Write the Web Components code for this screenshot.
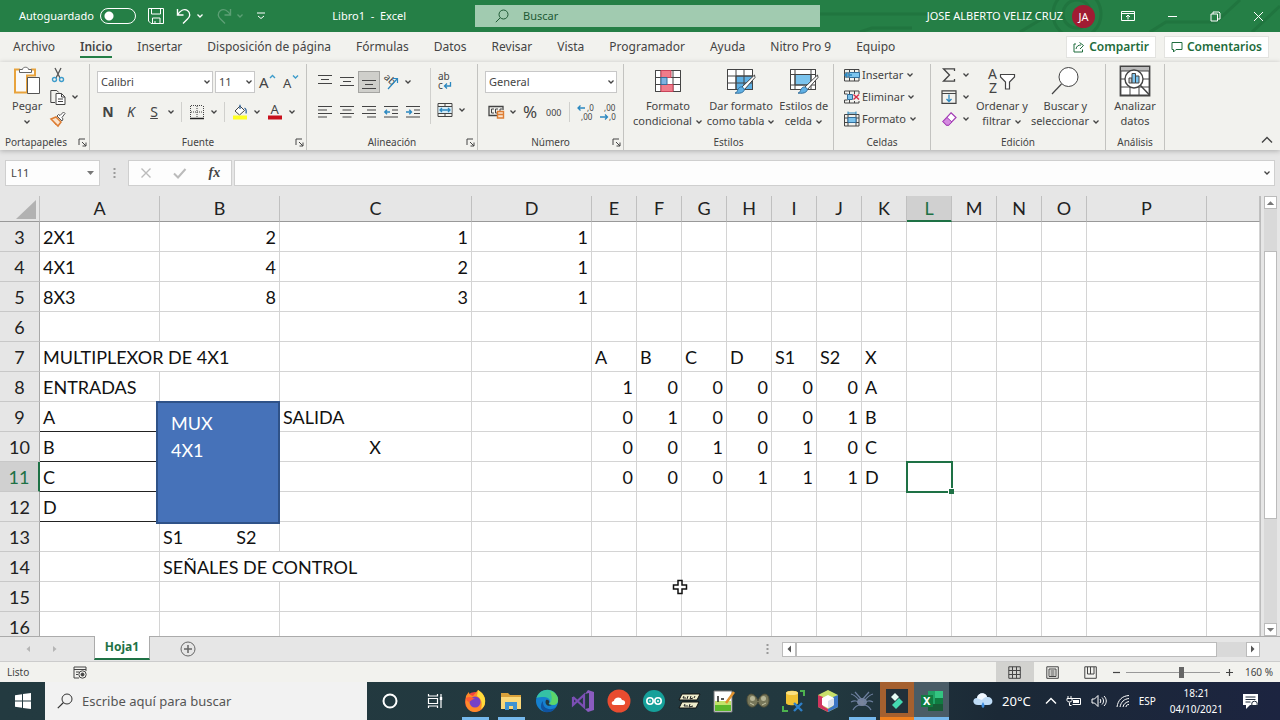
<!DOCTYPE html>
<html lang="es">
<head>
    <meta charset="UTF-8">
    <meta name="viewport" content="width=device-width, initial-scale=1.0">
    <title>Libro1 - Excel</title>
    <style>
        html, body {
            margin: 0;
            height: 100%;
        }
        body {
            --green: #257f46;
            --ink: #444;
            --ribbon: #f2f2ee;
            --grey: #e6e6e6;
            --line: #d4d4d4;
            display: flex;
            flex-direction: column;
            overflow: hidden;
            background: var(--grey);
            color: var(--ink);
            font: 11px/16px "Noto Sans", "Open Sans", sans-serif;
        }
        spread-sheet {
            flex: 1;
        }
    </style>
</head>
<body>
    <title-bar></title-bar>
    <ribbon-tabs></ribbon-tabs>
    <ribbon-panel></ribbon-panel>
    <formula-bar></formula-bar>
    <spread-sheet></spread-sheet>
    <sheet-tabs></sheet-tabs>
    <status-bar></status-bar>
    <task-bar></task-bar>

    <script>
        "use strict";

        // every icon: [width, height, markup]
        const ICONS = {
            chevron: [8, 6, '<path d="M1.5 1.5 4 4l2.500-2.500" stroke-width="1.300"/>'],
            chevronUp: [12, 8, '<path d="M1 6.500l5-5 5 5" stroke-width="1.400"/>'],
            caretDown: [9, 6, '<path d="M1 1h7L4.500 5z" fill="#777" stroke="none"/>'],
            launcher: [9, 9, '<path d="M1 7V1h6M4 4l4 4M8 4.500V8H4.500"/>'],
            save: [16, 16, '<path d="M.5.5h15v15H3l-2.500-2.500zM3.500.5v5.500h9V.5M4.500 15.500v-5.500h7.500v5.500M7 13v2.500"/>'],
            undo: [16, 16, '<path d="M1.500 1v6h6M1.500 7C4 3 8 .5 11.500 2.500c3.500 2.500 2.500 6.500 0 8.500L7 15.500" stroke-width="1.400"/>'],
            redo: [16, 16, '<path d="M14.500 1v6h-6M14.500 7C12 3 8 .5 4.500 2.500 1 5 2 9 4.500 11L9 15.500" stroke-width="1.400"/>'],
            customize: [10, 8, '<path d="M1 1h8M2 4l3 2.500L8 4"/>'],
            search: [14, 14, '<circle cx="8.500" cy="5.500" r="4.500"/><path d="M5.300 8.700.8 13.200"/>'],
            searchTask: [16, 16, '<circle cx="10" cy="6" r="5"/><path d="M6.500 9.500.8 15.200" stroke-width="1.200"/>'],
            ribbonMode: [14, 12, '<path d="M.5 1.500h13v9H.5zM.5 3.500h13M7 9.500V5.500M5 7l2-2 2 2"/>'],
            minimize: [11, 11, '<path d="M1 5.500h9"/>'],
            restore: [11, 11, '<path d="M1 3h6.500v7H1zM3 3V1h6l1 1v6H7.500"/>'],
            close: [11, 11, '<path d="M1 1l9 9M10 1l-9 9"/>'],
            share: [12, 12, '<path d="M3 3H1v8h8.500V8.500M3 8c.5-3 2.500-4 5-4M6.500 1.500 10.500 4.500l-3.500 3.500"/>'],
            comment: [12, 12, '<path d="M1 1.500h10v7H5L2.500 11V8.500H1z"/>'],

            paste: [28, 30, '<path d="M7 3.500H2v23h12V9.500h8v-6h-4" stroke="#e8a33d" stroke-width="2" fill="#fafafa"/><path d="M6.500 6.500h12v-3h-3c0-3-6-3-6 0h-3z" fill="#fff" stroke="#666"/><path d="M14.500 11.500h12v16h-12z" fill="#fff" stroke="#555"/>'],
            cut: [14, 16, '<path d="M4 1l5 10M10 1 5 11" stroke="#555" stroke-width="1.300"/><circle cx="3.500" cy="12.500" r="2" stroke="#3d9ccb" stroke-width="1.400"/><circle cx="10.500" cy="12.500" r="2" stroke="#3d9ccb" stroke-width="1.400"/>'],
            copy: [16, 16, '<path d="M5 13.500H.8V1.500h6l2 2"/><path d="M6 4.500h5.500l3.500 3.500v7.500H6z" fill="#fff"/><path d="M11.500 4.500V8H15M8 10h5M8 12.500h5"/>'],
            painter: [16, 16, '<path d="M1 8l5-2 5 5-3 4z" fill="#fbe3cc" stroke="#dd7d33" stroke-width="1.500"/><path d="M4 11l2 3" stroke="#dd7d33"/><path d="M7 5l5 5 1-2-1-1.500 3-4L13.500 1 10 4.500 8.500 3.500z" fill="#fff" stroke="#555"/>'],
            fontUp: [18, 16, '<text x="0" y="14" font-size="15">A</text><path d="M11 4l2.500-2.500L16 4" stroke="#3d9ccb" stroke-width="1.400"/>'],
            fontDown: [18, 16, '<text x="1" y="14" font-size="13">A</text><path d="M11 1.500 13.500 4 16 1.500" stroke="#3d9ccb" stroke-width="1.400"/>'],
            border: [16, 16, '<path d="M1.500 2v11M14.500 2v11M8 2v11M2 1.500h12M2 8h12" stroke-dasharray="1 1"/><path d="M1 14.500h14" stroke="#222" stroke-width="1.500"/>'],
            fill: [16, 16, '<path d="M3 7l5-5 4.500 4.500-5 4.500z" fill="#fff"/><path d="M8 5V.8M12.500 4c2 1 2 3 1.500 5.500" stroke="#36679b" stroke-width="1.300"/><path d="M1 11.500h14V15.500H1z" fill="#ffff20" stroke="none"/>'],
            fontColor: [16, 16, '<text x="3.500" y="10" font-size="13">A</text><path d="M1 11.500h14V15.500H1z" fill="#c8101c" stroke="none"/>'],
            top: [14, 14, '<path d="M0 .5h14M3 4.500h8M0 8.500h14" />'],
            middle: [14, 14, '<path d="M0 2.500h14M3 6.500h8M0 10.500h14"/>'],
            bottom: [14, 14, '<path d="M0 5.500h14M3 9.500h8M0 13.500h14"/>'],
            left: [14, 14, '<path d="M0 1.500h14M0 5h9M0 8.500h14M0 12h9"/>'],
            center: [14, 14, '<path d="M0 1.500h14M2.500 5h9M0 8.500h14M2.500 12h9"/>'],
            right: [14, 14, '<path d="M0 1.500h14M5 5h9M0 8.500h14M5 12h9"/>'],
            outdent: [14, 14, '<path d="M0 1.500h14M8 5h6M8 8.500h6M0 12h14"/><path d="M6 7H.8M3 4.800.8 7 3 9.200" stroke="#2b88c0" stroke-width="1.400"/>'],
            indent: [14, 14, '<path d="M0 1.500h14M8 5h6M8 8.500h6M0 12h14"/><path d="M0 7h5.500M3.300 4.800 5.500 7 3.300 9.200" stroke="#2b88c0" stroke-width="1.400"/>'],
            orient: [16, 16, '<text x="0" y="7" font-size="10" transform="rotate(42 4 6)">ab</text><path d="M5 15 14 5M10 4.500h4.500V9" stroke="#2b88c0" stroke-width="1.200"/>'],
            wrap: [16, 18, '<text x="1" y="7" font-size="10">ab</text><text x="1" y="16" font-size="10">c</text><path d="M13.500 9v4H7.500M10 10.500 7.500 13l2.500 2.500" stroke="#2b88c0" stroke-width="1.300"/>'],
            merge: [16, 16, '<path d="M1 1.500h14v13H1zM1 4.500h14M1 11.500h14M8 1.500v3M8 11.500v3"/><path d="M1.500 5h13v6h-13z" fill="#d5ecf8" stroke="none"/><path d="M3 8h10M5 6 3 8l2 2M11 6l2 2-2 2" stroke="#2b88c0" stroke-width="1.300"/>'],
            money: [17, 16, '<path d="M9 11.500H1v-9h14V6" stroke-width="1.300"/><path d="M6 5H3.500v4H6M10 5H7.500v4H9M12 8V5h2" /><path d="M9.500 7.500h6v6.500h-6zM9.500 10.500h6" fill="#fbe3cc" stroke="#dd7d33" stroke-width="1.400"/>'],
            percent: [16, 16, '<text x="0" y="14" font-size="17">%</text>'],
            thousands: [16, 12, '<text x="0" y="10" font-size="9" fill="#777">000</text>'],
            moreDec: [16, 18, '<text x="10" y="8" font-size="8">,0</text><text x="4" y="17" font-size="8">,00</text><path d="M8 5H1M3.500 2.500 1 5l2.500 2.500" stroke="#2b88c0" stroke-width="1.300"/>'],
            lessDec: [16, 18, '<text x="4" y="8" font-size="8">,00</text><text x="9" y="17" font-size="8">,0</text><path d="M0 14h7.500M5 11.500 7.500 14 5 16.500" stroke="#2b88c0" stroke-width="1.300"/>'],

            conditional: [28, 24, '<path d="M1.500 1.500h25v21h-25z" fill="#fff"/><path d="M1.500 8.500h25M1.500 15.500h25M7 1.500v21M19 1.500v21M1.500 1.500h25v21h-25z"/><path d="M7 1.500h10v7H7zM7 15.500h12v7H7z" fill="#f07c8a" stroke="#c8445a"/><path d="M7 8.500h6v7H7z" fill="#7fb2e0" stroke="#336f9c"/>'],
            formatTable: [28, 26, '<path d="M.5 1.500h25v20H.5z" fill="#fff"/><path d="M9 8h16.500v13.500H9z" fill="#5fb0e4"/><path d="M.5 1.500h25v20H.5zM.5 8h25M.5 15h25M9 1.500v20M17 1.500v20"/><path d="M27.500 7 15 19l2.500 2.500L28 9.500z" fill="#fff"/><path d="M8 25c3 0 2-5 5.500-6 3-.5 5 2.500 3 4.500-2 2-5.500 2-8.500 1.500z" fill="#5fb0e4" stroke="#336f9c"/>'],
            cellStyles: [28, 26, '<path d="M.5 1.500h25v20H.5z" fill="#fff"/><path d="M5 6.500h16V17H5z" fill="#7cc4ee"/><path d="M.5 1.500h25v20H.5zM.5 6.500h25M.5 17h25M5 1.500v20M21 1.500v20"/><path d="M27.500 7 15 19l2.500 2.500L28 9.500z" fill="#fff"/><path d="M8 25c3 0 2-5 5.500-6 3-.5 5 2.500 3 4.500-2 2-5.500 2-8.500 1.500z" fill="#5fb0e4" stroke="#336f9c"/>'],
            insertCells: [16, 14, '<path d="M.5 1.500h14.500v11.500H.5zM.5 5h14.500M.5 9h14.500M5.500 1.500v11.500M10.500 1.500v11.500"/><path d="M5 4.500h10.500v5H5z" fill="#7cc4ee" stroke="#336f9c"/><path d="M8 7H1M3.500 4.500 1 7l2.500 2.500" stroke="#2b88c0" stroke-width="1.400"/>'],
            deleteCells: [16, 14, '<path d="M.5 4V1h14.500v3M.5 10v3h14.500v-2M5.500 1v3M10.500 1v3M5.500 10v3M10.500 11v2M.5 4h3M.5 10h3"/><path d="M3.500 4.500h5v5h-5z" fill="#7cc4ee" stroke="#336f9c"/><path d="M9.500 4.500l5.500 5M15 4.500l-5.500 5" stroke="#d6304c" stroke-width="1.500"/>'],
            formatCells: [16, 16, '<path d="M.5 3.500h14.500v11.500H.5zM.5 7h14.500M.5 11.500h14.500M4 3.500v11.500M12 3.500v11.500"/><path d="M4 6.500h8v5H4z" fill="#7cc4ee" stroke="#336f9c"/><path d="M4 .5v3M12 .5v3M4 2h8" stroke="#2b88c0"/>'],
            sum: [14, 14, '<path d="M12.500 3V.8H1.500L7.500 7l-6 6.200h11V11" stroke-width="1.300"/>'],
            fillDown: [16, 14, '<path d="M1 .8h14v12.500H1zM1 3.500h14" stroke-width="1.200"/><path d="M8 4.500v7M5.500 9 8 11.500 10.500 9" stroke="#2b88c0" stroke-width="1.300"/>'],
            eraser: [15, 14, '<path d="M9 .8l5 4.700-7.500 7.700H4.500L1 9.500z" fill="#fff" stroke="#a33db5" stroke-width="1.200"/><path d="M5 5.500 10 10l-3.500 3.200H4.500L1 9.500z" fill="#d58be0" stroke="#a33db5"/>'],
            sort: [28, 30, '<text x="0" y="13" font-size="14" fill="#2b88c0">A</text><text x="1" y="27" font-size="14">Z</text><path d="M12.500 8.500h14v2.500l-5 5v7h-4v-7l-5-5z" fill="#fff" stroke-width="1.200"/>'],
            find: [28, 28, '<circle cx="17.500" cy="10" r="9.500" fill="#fff"/><path d="M10.500 17 1 27" stroke-width="1.200"/>'],
            analyze: [32, 32, '<path d="M1.500 1.500h29v29h-29z" fill="#fff" stroke-width="1.800"/><path d="M2 2h28v4H2z" fill="#bbb" stroke="none"/><path d="M1.500 6h29M1.500 14h29M1.500 22h29M11 22v8M20 22v8"/><circle cx="15" cy="14" r="9" fill="#fff" stroke-width="1.400"/><path d="M10 13h3v5h-3z" fill="#ccc"/><path d="M13 8.500h3.500V18H13zM16.500 11H20v7h-3.500z" fill="#7cc4ee"/><path d="M21.500 20.500l9 9.500" stroke-width="1.500"/>'],

            cancel: [12, 12, '<path d="M1.500 1.500l9 9M10.500 1.500l-9 9" stroke="#bbb" stroke-width="1.400"/>'],
            accept: [14, 12, '<path d="M1 6.500 5 10.500 12.500 2" stroke="#bbb" stroke-width="2"/>'],
            grip: [3, 12, '<path d="M1.500 1v2M1.500 5v2M1.500 9v2" stroke="#999" stroke-width="2"/>'],
            tabPrev: [6, 8, '<path d="M5 1v6L1.500 4z" fill="#b5b5b5" stroke="none"/>'],
            tabNext: [6, 8, '<path d="M1 1v6l3.500-3z" fill="#b5b5b5" stroke="none"/>'],
            arrowUp: [9, 6, '<path d="M.8 5 4.500 1.200 8.200 5z" fill="#777" stroke="none"/>'],
            arrowDown: [9, 6, '<path d="M.8 1 4.500 4.800 8.200 1z" fill="#777" stroke="none"/>'],
            arrowLeft: [6, 8, '<path d="M5 .5v7L1.500 4z" fill="#555" stroke="none"/>'],
            arrowRight: [6, 8, '<path d="M1 .5v7L4.500 4z" fill="#555" stroke="none"/>'],
            add: [16, 16, '<circle cx="8" cy="8" r="7"/><path d="M8 4v8M4 8h8" stroke-width="1.500"/>'],
            record: [14, 13, '<path d="M6 12H1V1h12v4M1 3.500h12M3 6h3M3 8.500h2"/><circle cx="9.500" cy="8.500" r="3.700"/><circle cx="9.500" cy="8.500" r="1.500" fill="#444"/>'],
            viewNormal: [13, 13, '<path d="M.8.800h11.500v11.500H.8zM4.500.8v11.500M8.500.8v11.500M.8 4.500h11.500M.8 8.500h11.500"/>'],
            viewLayout: [13, 13, '<path d="M.8.800h11.500v11.500H.8zM3 3h7v7.500H3zM4.500 5h4M4.500 7h4M4.500 9h4"/>'],
            viewBreak: [13, 13, '<path d="M.8.800h11.500v11.500H.8zM3.500 1v7h6.500V1M6.500 1v7"/>'],
            minus: [9, 9, '<path d="M1 4.500h7" stroke-width="1.200"/>'],
            plus: [9, 9, '<path d="M1 4.500h7M4.500 1v7" stroke-width="1.200"/>'],

            windows: [16, 16, '<path d="M0 2.300 7 1.200V7.500H0zM8 1 16 0v7.500H8zM0 8.500h7v6.300L0 13.700zM8 8.500h8V16l-8-1z" fill="#fff" stroke="none"/>'],
            cortana: [16, 16, '<circle cx="8" cy="8" r="6.500" stroke-width="2"/>'],
            taskView: [16, 16, '<path d="M1.500 1v2h9V1M1.500 5.500h9v5h-9zM1.500 15v-2h9v2M14 1v14" stroke-width="1.200"/><path d="M12.800 4h2.400v3h-2.400z" fill="#fff" stroke="none"/>'],
            firefox: [24, 24, '<circle cx="12" cy="13" r="10" fill="#f5463d" stroke="none"/><path d="M3 7c1-2 2-3 3-4 0 3 2 3 4 4l5-6c5 3 8 7 7 13-1 5-5 9-10 9C5 23 1 17 3 7z" fill="#ff8a2a" stroke="none"/><path d="M15 1c5 3 8 8 7 13 0 2-2 5-4 6 2-6 0-11-4-13z" fill="#ffdd3c" stroke="none"/><circle cx="12" cy="13" r="5.500" fill="#7542c8" stroke="none"/><path d="M3 9c3-2 6-1 9 1-3 0-4 2-6 3-2-1-3-2-3-4z" fill="#ff5c36" stroke="none"/>'],
            explorer: [24, 24, '<path d="M2 4h7l2 2h11v4H2z" fill="#d9a13a" stroke="none"/><path d="M2 8h20v12H2z" fill="#fbd879" stroke="none"/><path d="M6 13h12v8h-4v-4h-4v4H6z" fill="#3f93d2" stroke="none"/>'],
            edge: [24, 24, '<circle cx="12" cy="12" r="11" fill="#1580cf" stroke="none"/><path d="M1.500 9C5-2 20-2 23 9c1 6-4 8-9 6 3-3 0-7-5-7-3 0-6 0-7.500 1z" fill="#35c1a5" stroke="none"/><path d="M15 2c5 1 8 5 8 9 0 5-4 6-9 4 4-3 3-8 1-13z" fill="#5cd66a" stroke="none"/><path d="M8 12c-1 7 7 11 13 6-3 5-8 6-11 5-5-2-5-8-2-11z" fill="#1053a0" stroke="none"/><path d="M11 11c2-1 4 1 3 3-1 1 1 2 3 2-3 2-8 0-6-5z" fill="#233a40" stroke="none"/>'],
            studio: [24, 24, '<path d="M17 1l6 2v18l-6 2-3-3 4-1V4l-4 1z" fill="#8a5cc0" stroke="none"/><path d="M2 8v8l11-10v12L2 8" stroke="#7b4fb4" stroke-width="2.200"/>'],
            cloudApp: [24, 24, '<circle cx="12" cy="12" r="11.500" fill="#e94c30" stroke="none"/><path d="M7 16c-3 0-3-4 0-4 0-4 7-5 8-1 4 0 4 5 1 5z" fill="#fff" stroke="none"/>'],
            arduino: [24, 24, '<circle cx="12" cy="12" r="11" fill="#16a09a" stroke="none"/><circle cx="8" cy="12" r="3.200" stroke="#fff" stroke-width="1.600"/><circle cx="16" cy="12" r="3.200" stroke="#fff" stroke-width="1.600"/><path d="M7 12h2M15 12h2M16 11v2" stroke="#fff"/>'],
            chips: [24, 24, '<path d="M5 5h18l-3 6H2zM5 13h17l-3 6H2z" fill="#efeccb" stroke="#111"/><path d="M7 7l-1 2h3M11 7l-1 3M14 7l-1 3 3-1M18 7l-1 2M8 15l-1 2h4M13 15l-1 3 4-1" stroke="#222"/>'],
            notes: [24, 24, '<path d="M2 2h18v21H2z" fill="#fff" stroke="#777"/><path d="M3 15h16v7H3z" fill="#5cb82b" stroke="none"/><path d="M3 12h16v4H3z" fill="#c2e36a" stroke="none"/><path d="M6 7v6M9 10h3" stroke="#222" stroke-width="1.500"/><path d="M22 3 14 14" stroke="#e0922f" stroke-width="2.500"/>'],
            brain: [24, 24, '<path d="M12 12C9 3 1 3 1 11s8 10 11 2c3 8 11 6 11-2s-8-8-11 1z" fill="#77775a" stroke="#504f3a"/><circle cx="6.500" cy="9.500" r="2.500" fill="#b6b596" stroke="none"/><circle cx="17.500" cy="9.500" r="2.500" fill="#b6b596" stroke="none"/><path d="M4 14l4 2M20 14l-4 2" stroke="#c5c4a5"/>'],
            dbTools: [24, 24, '<path d="M5 4c0-3 12-3 12 0v10c0 3-12 3-12 0z" fill="#f2c233" stroke="none"/><ellipse cx="11" cy="4" rx="6" ry="2" fill="#fbe081" stroke="none"/><path d="M19 2h4v5M2 17v5h5" stroke="#4db34f" stroke-width="2"/><path d="M13 14l8 8M21 14l-8 8" stroke="#2d7fc8" stroke-width="2.400"/>'],
            cube: [24, 24, '<path d="M12 1l10 5v12l-10 5L2 18V6z" fill="#c9e06b" stroke="none"/><path d="M2 6l5 2v9l5 3v3L2 18z" fill="#d0355e" stroke="none"/><path d="M22 6l-5 2v9l-5 3v3l10-5z" fill="#3c75c4" stroke="none"/><path d="M12 6l6 3v7l-6 3-6-3V9z" fill="#fff" stroke="none"/><path d="M12 12l6-3v7l-6 3z" fill="#d9e0ec" stroke="none"/>'],
            spider: [24, 24, '<ellipse cx="12" cy="13" rx="5" ry="4" fill="#78849c" stroke="none"/><path d="M1 5c4 1 6 4 9 7M23 5c-4 1-6 4-9 7M1 13c4-2 6-1 9 1M23 13c-4-2-6-1-9 1M3 21c2-4 5-5 8-5M21 21c-2-4-5-5-8-5M5 3l7 8M19 3l-7 8" stroke="#6d7f9f" stroke-width="1.200"/>'],
            filmora: [24, 24, '<path d="M1 0h22v24H1z" fill="#22303a" stroke="none"/><path d="M6 8l4-4 4 4-4 4z" fill="#e7fbf5" stroke="none"/><path d="M7 16l7-7 4 4-7 7z" fill="#45d8b0" stroke="none"/>'],
            excel: [24, 24, '<path d="M8 2h14v20H8z" fill="#21a366" stroke="none"/><path d="M15 2h8v7h-8z" fill="#33c481" stroke="none"/><path d="M15 9h8v6h-8z" fill="#107c41" stroke="none"/><path d="M8 15h15v7H8z" fill="#185c37" stroke="none"/><path d="M1 6h12v12H1z" fill="#107c41" stroke="none"/><text x="3" y="16" font-size="11" font-weight="700" fill="#fff">X</text>'],
            weather: [20, 16, '<path d="M5 12c-6 0-6-7-1-7 1-6 9-6 10-1 6-1 8 8 1 8z" fill="#bfdcf7" stroke="none"/><path d="M4 5c1-6 9-6 10-1-3 0-4 2-5 3-2-1-4-1-5-2z" fill="#f2f8ff" stroke="none"/><path d="M10 9c2 3 2 5 0 6-2-1-2-3 0-6z" fill="#3f8ee0" stroke="none"/>'],
            battery: [16, 12, '<path d="M5.500 3.500h9v6h-8M2 1v2.500M5 1v2.500M1 3.500h5v2c0 2-5 2-5 0zM3.500 7.500v3h2"/><path d="M7 5h6v3H7z" fill="#fff" stroke="none"/>'],
            volume: [16, 14, '<path d="M1 5h2.500L7 1.500v11L3.500 9H1zM9 5c1 1.300 1 2.700 0 4M11 3.500c2 2 2 5 0 7M13 2c3 3 3 7 0 10"/>'],
            wifi: [14, 14, '<path d="M1 13C2 6 6 2 13 1.500M4 13c1-5 4-8 9-8.500M7 13c.5-3 3-5 6-5.500M10 13c0-1.500 1-2.500 3-2.500"/>'],
            notify: [17, 17, '<path d="M1 1h15v11h-8l-4 4v-4H1z" fill="#fff" stroke="none"/><path d="M3.500 4h10M3.500 6.500h10M3.500 9h5" stroke="#1f2b3a"/><circle cx="12.500" cy="11" r="2.800" stroke="#1f2b3a"/>'],
            cross: [16, 16, '<path d="M6 1.500h4v4.500h4.500v4H10v4.500H6V10H1.500V6H6z" fill="#fff" stroke="#111" stroke-width="1.500"/>']
        };

        // base class: opens the shadow root and puts the markup of the subclass in it
        class BaseElement extends HTMLElement {
            constructor() {
                super();
                this.attachShadow({ mode: "open" });
            }
            connectedCallback() {
                const template = document.createElement("template");
                template.innerHTML = `<style>
                    :host, * { box-sizing: border-box; }
                    button, input, select {
                        font: inherit; color: inherit; background: none;
                        border: 0; padding: 0; margin: 0; outline: 0; border-radius: 0;
                    }
                    button { cursor: pointer; }
                </style>` + this.render();
                this.shadowRoot.replaceChildren(template.content.cloneNode(true));
            }
        }

        class AppIcon extends BaseElement {
            render() {
                const [w, h, markup] = ICONS[this.getAttribute("name")];
                return `<style>
                    :host { display: inline-flex; flex: none; box-sizing: content-box; }
                    svg { display: block; fill: none; stroke: currentColor; overflow: visible; }
                    text { fill: currentColor; stroke: none; }
                </style>
                <svg width="${w}" height="${h}" viewBox="0 0 ${w} ${h}" aria-hidden="true">${markup}</svg>`;
            }
        }
        customElements.define("app-icon", AppIcon);

        class TitleBar extends BaseElement {
            render() {
                return `<style>
                    :host {
                        display: grid; grid-template-columns: 475fr 345fr 460fr; align-items: center;
                        flex: none; height: 32px; background: var(--green); color: #fff; position: relative; overflow: hidden;
                    }
                    .art { position: absolute; right: 0; top: 0; stroke: #1e6f3b; fill: none; stroke-width: 3; opacity: .6; }
                    .left, .right, .save { display: flex; align-items: center; }
                    .left { padding-left: 19px; gap: 12px; }
                    .left button, .right button { display: flex; align-items: center; gap: 4px; }
                    .save { gap: 6px; }
                    .save input {
                        appearance: none; width: 36px; height: 16px; border: 1px solid #fff; border-radius: 8px;
                        background: radial-gradient(circle at 8px 7px, #fff 4px, transparent 5px);
                    }
                    .off { opacity: .25; }
                    .name { flex: 1; text-align: right; padding-right: 69px; white-space: pre; }
                    .search {
                        display: flex; align-items: center; gap: 14px; height: 22px; padding-left: 20px;
                        background: #a1cbb0; color: #1f5a35; position: relative;
                    }
                    .search input { flex: 1; }
                    .search input::placeholder { color: #1f5a35; opacity: 1; }
                    .right { justify-content: flex-end; padding-right: 16px; gap: 32px; position: relative; }
                    .user { display: flex; align-items: center; gap: 9px; margin-right: -6px; }
                    .avatar { width: 23px; line-height: 23px; border-radius: 50%; background: #a01c33; text-align: center; }
                </style>
                <svg class="art" width="460" height="32"><path d="M0 14h230M40 32l12-4h40M200 32l30-18M420 0l-24 22h-50l-16 10M460 6l-28 26"/><circle cx="257" cy="14" r="24"/><circle cx="257" cy="14" r="14"/></svg>
                <div class="left">
                    <label class="save">Autoguardado <input type="checkbox" role="switch"></label>
                    <button aria-label="Guardar"><app-icon name="save"></app-icon></button>
                    <button aria-label="Deshacer"><app-icon name="undo"></app-icon><app-icon name="chevron"></app-icon></button>
                    <button aria-label="Rehacer" class="off"><app-icon name="redo"></app-icon><app-icon name="chevron"></app-icon></button>
                    <button aria-label="Personalizar"><app-icon name="customize"></app-icon></button>
                    <span class="name">Libro1  -  Excel</span>
                </div>
                <label class="search"><app-icon name="search"></app-icon><input type="search" aria-label="Buscar" placeholder="Buscar"></label>
                <div class="right">
                    <span class="user">JOSE ALBERTO VELIZ CRUZ <span class="avatar">JA</span></span>
                    <button aria-label="Opciones de la cinta"><app-icon name="ribbonMode"></app-icon></button>
                    <button aria-label="Minimizar"><app-icon name="minimize"></app-icon></button>
                    <button aria-label="Restaurar"><app-icon name="restore"></app-icon></button>
                    <button aria-label="Cerrar"><app-icon name="close"></app-icon></button>
                </div>`;
            }
        }
        customElements.define("title-bar", TitleBar);

        class RibbonTabs extends BaseElement {
            render() {
                const tabs = ["Archivo", "Inicio", "Insertar", "Disposición de página", "Fórmulas", "Datos",
                    "Revisar", "Vista", "Programador", "Ayuda", "Nitro Pro 9", "Equipo"];
                return `<style>
                    :host { display: flex; flex: none; align-items: center; height: 30px; padding: 0 12px 0 13px; background: var(--ribbon); font-size: 12px; }
                    nav { display: flex; gap: 25px; flex: 1; }
                    a { color: inherit; text-decoration: none; white-space: nowrap; padding: 3px 0 1px; border-bottom: 2px solid transparent; }
                    a.on { font-weight: 600; border-color: var(--green); }
                    .actions { display: flex; gap: 10px; }
                    button {
                        display: flex; align-items: center; gap: 4px; height: 20px; padding: 0 6px;
                        background: #fff; color: #1e6c3c; font-weight: 600; box-shadow: 0 0 0 1px #e3e3e0;
                    }
                </style>
                <nav>${tabs.map(t => `<a href="#"${t === "Inicio" ? ' class="on"' : ""}>${t}</a>`).join("")}</nav>
                <div class="actions">
                    <button><app-icon name="share"></app-icon>Compartir</button>
                    <button><app-icon name="comment"></app-icon>Comentarios</button>
                </div>`;
            }
        }
        customElements.define("ribbon-tabs", RibbonTabs);

        // small ribbon button; with the "menu" attribute it gets a drop-down arrow
        class ToolButton extends BaseElement {
            render() {
                const icon = this.getAttribute("icon");
                return `<style>
                    :host { display: inline-flex; flex: none; }
                    button { display: flex; align-items: center; justify-content: center; width: 22px; height: 22px; }
                    .menu { width: 12px; }
                    :host([on]) button { background: #cfcfcb; box-shadow: inset 0 0 0 1px #a5a5a2; }
                    :host([wide]) button { width: auto; gap: 2px; white-space: nowrap; }
                    :host([wide]) .menu { width: 14px; }
                </style>
                <button aria-label="${this.getAttribute("label") || icon || ""}">${icon ? `<app-icon name="${icon}"></app-icon>` : ""}<slot></slot></button>
                ${this.hasAttribute("menu") ? '<button class="menu" aria-label="Más"><app-icon name="chevron"></app-icon></button>' : ""}`;
            }
        }
        customElements.define("tool-button", ToolButton);

        // tall ribbon button: icon over one or two lines of text
        class BigButton extends BaseElement {
            render() {
                return `<style>
                    :host { display: block; flex: none; }
                    button { display: flex; flex-direction: column; align-items: center; line-height: 15px; white-space: nowrap; }
                    .pic { display: flex; align-items: center; height: 34px; }
                    .text { text-align: center; }
                    .text app-icon { vertical-align: middle; }
                </style>
                <button>
                    <span class="pic"><app-icon name="${this.getAttribute("icon")}"></app-icon></span>
                    <span class="text"><slot></slot>${this.hasAttribute("menu") ? ' <app-icon name="chevron"></app-icon>' : ""}</span>
                </button>`;
            }
        }
        customElements.define("big-button", BigButton);

        class DropDown extends BaseElement {
            render() {
                return `<style>
                    :host { display: grid; align-items: center; justify-items: end; height: 22px; background: #fff; border: 1px solid #c8c8c8; }
                    select { grid-area: 1 / 1; appearance: none; width: 100%; height: 20px; padding-left: 3px; }
                    app-icon { grid-area: 1 / 1; pointer-events: none; padding-right: 1px; }
                </style>
                <select aria-label="${this.getAttribute("label")}"><option>${this.getAttribute("value")}</option></select>
                <app-icon name="chevron"></app-icon>`;
            }
        }
        customElements.define("drop-down", DropDown);

        class RibbonGroup extends BaseElement {
            render() {
                return `<style>
                    :host { display: flex; flex-direction: column; height: 86px; border-right: 1px solid #c3c3c0; }
                    .body { flex: 1; display: flex; }
                    footer { display: grid; grid-template-columns: 1fr auto 1fr; align-items: center; height: 16px; font-size: 10px; }
                    footer span { grid-column: 2; }
                    footer button { display: flex; justify-self: end; padding-right: 2px; }
                    :host([title="Portapapeles"]) footer { grid-template-columns: 5px auto 1fr; }
                </style>
                <div class="body"><slot></slot></div>
                <footer><span>${this.getAttribute("title")}</span>
                ${this.hasAttribute("dialog") ? '<button aria-label="Abrir cuadro"><app-icon name="launcher"></app-icon></button>' : ""}</footer>`;
            }
        }
        customElements.define("ribbon-group", RibbonGroup);

        class RibbonPanel extends BaseElement {
            render() {
                return `<style>
                    :host {
                        display: grid; grid-template-columns: 90px 217px 171px 146px 210px 97px 175px 59px 1fr;
                        flex: none; height: 88px; padding-top: 2px; background: var(--ribbon);
                        box-shadow: 0 1px 5px rgba(0, 0, 0, .25); position: relative;
                    }
                    .col { display: flex; flex-direction: column; }
                    .row { display: flex; align-items: center; height: 30px; }
                    .two { padding: 3px 0 0 7px; }
                    .font .row, .number .row { gap: 1px; }
                    .font drop-down:first-child { width: 116px; margin-right: 1px; }
                    .font drop-down:nth-child(2) { width: 40px; margin-right: 1px; }
                    .number drop-down { width: 132px; }
                    .sep { width: 1px; height: 20px; background: #d0d0cd; margin: 0 3px; }
                    .side { border-left: 1px solid #d0d0cd; height: 56px; margin: 4px 0 0 6px; padding-left: 3px; }
                    .side .row:first-child { height: 28px; }
                    .clip { padding-left: 12px; gap: 5px; display: flex; }
                    .big { display: flex; gap: 4px; padding-left: 9px; }
                    .cells { padding-left: 10px; }
                    .edit { padding-left: 7px; }
                    .find { display: flex; gap: 3px; padding-left: 4px; }
                    .data { margin: 0 auto; }
                    b, i, u { font-size: 14px; }
                    .end { display: flex; align-items: flex-end; justify-content: flex-end; padding: 0 7px 2px 0; }
                </style>
                <ribbon-group title="Portapapeles" dialog>
                    <div class="clip">
                        <big-button icon="paste">Pegar<br><app-icon name="chevron"></app-icon></big-button>
                        <div class="col">
                            <tool-button icon="cut" label="Cortar"></tool-button>
                            <tool-button icon="copy" label="Copiar" menu></tool-button>
                            <tool-button icon="painter" label="Copiar formato"></tool-button>
                        </div>
                    </div>
                </ribbon-group>
                <ribbon-group title="Fuente" dialog>
                    <div class="col two font">
                        <div class="row">
                            <drop-down label="Fuente" value="Calibri"></drop-down>
                            <drop-down label="Tamaño" value="11"></drop-down>
                            <tool-button icon="fontUp" label="Aumentar"></tool-button>
                            <tool-button icon="fontDown" label="Disminuir"></tool-button>
                        </div>
                        <div class="row">
                            <tool-button label="Negrita"><b>N</b></tool-button>
                            <tool-button label="Cursiva"><i>K</i></tool-button>
                            <tool-button label="Subrayado" menu><u>S</u></tool-button>
                            <span class="sep"></span>
                            <tool-button icon="border" label="Bordes" menu></tool-button>
                            <span class="sep"></span>
                            <tool-button icon="fill" label="Relleno" menu></tool-button>
                            <tool-button icon="fontColor" label="Color" menu></tool-button>
                        </div>
                    </div>
                </ribbon-group>
                <ribbon-group title="Alineación" dialog>
                    <div class="col two">
                        <div class="row">
                            <tool-button icon="top" label="Arriba"></tool-button>
                            <tool-button icon="middle" label="Medio"></tool-button>
                            <tool-button icon="bottom" label="Abajo" on></tool-button>
                            <tool-button icon="orient" label="Orientación" menu></tool-button>
                        </div>
                        <div class="row">
                            <tool-button icon="left" label="Izquierda"></tool-button>
                            <tool-button icon="center" label="Centro"></tool-button>
                            <tool-button icon="right" label="Derecha"></tool-button>
                            <tool-button icon="outdent" label="Disminuir sangría"></tool-button>
                            <tool-button icon="indent" label="Aumentar sangría"></tool-button>
                        </div>
                    </div>
                    <div class="col side">
                        <div class="row"><tool-button icon="wrap" label="Ajustar texto"></tool-button></div>
                        <div class="row"><tool-button icon="merge" label="Combinar" menu></tool-button></div>
                    </div>
                </ribbon-group>
                <ribbon-group title="Número" dialog>
                    <div class="col two number">
                        <div class="row"><drop-down label="Formato de número" value="General"></drop-down></div>
                        <div class="row">
                            <tool-button icon="money" label="Moneda" menu></tool-button>
                            <tool-button icon="percent" label="Porcentaje"></tool-button>
                            <tool-button icon="thousands" label="Millares"></tool-button>
                            <span class="sep"></span>
                            <tool-button icon="moreDec" label="Más decimales"></tool-button>
                            <tool-button icon="lessDec" label="Menos decimales"></tool-button>
                        </div>
                    </div>
                </ribbon-group>
                <ribbon-group title="Estilos">
                    <div class="big">
                        <big-button icon="conditional" menu>Formato<br>condicional</big-button>
                        <big-button icon="formatTable" menu>Dar formato<br>como tabla</big-button>
                        <big-button icon="cellStyles" menu>Estilos de<br>celda</big-button>
                    </div>
                </ribbon-group>
                <ribbon-group title="Celdas">
                    <div class="col cells">
                        <tool-button icon="insertCells" label="Insertar" wide menu>Insertar</tool-button>
                        <tool-button icon="deleteCells" label="Eliminar" wide menu>Eliminar</tool-button>
                        <tool-button icon="formatCells" label="Formato" wide menu>Formato</tool-button>
                    </div>
                </ribbon-group>
                <ribbon-group title="Edición">
                    <div class="col edit">
                        <tool-button icon="sum" label="Autosuma" menu></tool-button>
                        <tool-button icon="fillDown" label="Rellenar" menu></tool-button>
                        <tool-button icon="eraser" label="Borrar" menu></tool-button>
                    </div>
                    <div class="find">
                        <big-button icon="sort" menu>Ordenar y<br>filtrar</big-button>
                        <big-button icon="find" menu>Buscar y<br>seleccionar</big-button>
                    </div>
                </ribbon-group>
                <ribbon-group title="Análisis">
                    <big-button class="data" icon="analyze">Analizar<br>datos</big-button>
                </ribbon-group>
                <div class="end"><button aria-label="Contraer la cinta"><app-icon name="chevronUp"></app-icon></button></div>`;
            }
        }
        customElements.define("ribbon-panel", RibbonPanel);

        class FormulaBar extends BaseElement {
            render() {
                return `<style>
                    :host { display: flex; flex: none; align-items: center; height: 46px; padding: 0 5px; background: var(--grey); }
                    .box { display: flex; align-items: center; height: 26px; background: #fdfdfd; border: 1px solid #cfcfcf; }
                    .name { width: 95px; padding: 0 4px 0 5px; }
                    .name input { flex: 1; min-width: 0; }
                    app-icon[name="grip"] { margin: 0 12px 0 13px; }
                    .tools { width: 104px; justify-content: space-around; margin-right: 2px; }
                    .tools button { display: flex; }
                    .tools i { font: italic 700 14px "Liberation Serif", serif; }
                    .formula { flex: 1; padding: 0 3px; }
                    .formula input { flex: 1; }
                </style>
                <div class="box name"><input aria-label="Cuadro de nombres" value="L11"><app-icon name="caretDown"></app-icon></div>
                <app-icon name="grip"></app-icon>
                <div class="box tools">
                    <button aria-label="Cancelar"><app-icon name="cancel"></app-icon></button>
                    <button aria-label="Introducir"><app-icon name="accept"></app-icon></button>
                    <button aria-label="Insertar función"><i>fx</i></button>
                </div>
                <div class="box formula"><input aria-label="Barra de fórmulas"><app-icon name="chevron"></app-icon></div>`;
            }
        }
        customElements.define("formula-bar", FormulaBar);

        const COLUMNS = "ABCDEFGHIJKLMNOP".split("");
        const WIDTHS = { A: 120, B: 120, C: 192, D: 120, P: 120 };
        const CELLS = {
            A3: "2X1", B3: 2, C3: 1, D3: 1,
            A4: "4X1", B4: 4, C4: 2, D4: 1,
            A5: "8X3", B5: 8, C5: 3, D5: 1,
            A7: "MULTIPLEXOR DE 4X1", E7: "A", F7: "B", G7: "C", H7: "D", I7: "S1", J7: "S2", K7: "X",
            A8: "ENTRADAS", E8: 1, F8: 0, G8: 0, H8: 0, I8: 0, J8: 0, K8: "A",
            A9: "A", C9: "SALIDA", E9: 0, F9: 1, G9: 0, H9: 0, I9: 0, J9: 1, K9: "B",
            A10: "B", C10: "X", E10: 0, F10: 0, G10: 1, H10: 0, I10: 1, J10: 0, K10: "C",
            A11: "C", E11: 0, F11: 0, G11: 0, H11: 1, I11: 1, J11: 1, K11: "D",
            A12: "D", B13: "S1<span>S2</span>", B14: "SEÑALES DE CONTROL"
        };
        // texts that run over into the next cell
        const SPANS = { A7: 2, B14: 2 };

        class SpreadSheet extends BaseElement {
            row(n) {
                let html = `<tr><th scope="row"${n === 11 ? ' class="on"' : ""}>${n}</th>`;
                for (let i = 0; i < COLUMNS.length; i++) {
                    const id = COLUMNS[i] + n;
                    const value = CELLS[id] ?? "";
                    const names = [];
                    if (typeof value === "number") names.push("num");
                    if (COLUMNS[i] === "A" && n > 8 && n < 13) names.push("wire");
                    if (id === "C10") names.push("mid");
                    if (id === "L11") names.push("active");
                    html += `<td class="${names.join(" ")}"${SPANS[id] ? ` colspan="${SPANS[id]}"` : ""}>${value}</td>`;
                    if (SPANS[id]) i += SPANS[id] - 1;
                }
                return html + "<td></td></tr>";
            }
            render() {
                const rows = [];
                for (let n = 3; n <= 16; n++) rows.push(this.row(n));
                return `<style>
                    :host { display: flex; min-height: 0; overflow: hidden; background: var(--grey); color: #111; font: 18px/28px Lato, "Noto Sans", sans-serif; }
                    .view { flex: 1; position: relative; overflow: hidden; }
                    table { width: 100%; table-layout: fixed; border-collapse: separate; border-spacing: 0; background: #fff; }
                    th { background: var(--grey); font-weight: 400; padding: 0; border-right: 1px solid #a9a9a9; border-bottom: 1px solid #c8c8c8; color: #222; }
                    thead th { height: 26px; line-height: 25px; border-right-color: #c0c0c0; border-bottom-color: #999; }
                    thead svg { display: block; margin: 2px 0 0 16px; fill: #b2b2b2; }
                    td { height: 30px; padding: 2px 4px 0 3px; line-height: 27px; border-right: 1px solid var(--line); border-bottom: 1px solid var(--line); white-space: nowrap; }
                    td.num { text-align: right; padding-right: 3px; }
                    td.mid { text-align: center; }
                    td.wire { border-bottom-color: #222; }
                    td span { margin-left: 53px; }
                    td.active { outline: 2px solid #1e7145; outline-offset: -1px; position: relative; }
                    td.active::after { content: ""; position: absolute; right: -3px; bottom: -3px; width: 5px; height: 5px; background: #1e7145; border: solid #fff; border-width: 1px 0 0 1px; }
                    th.on { background: #d0d0d0; color: #1e7145; }
                    thead th.on { border-bottom: 2px solid #1e7145; line-height: 24px; }
                    tbody th.on { border-right: 2px solid #1e7145; }
                    .shape { position: absolute; left: 156px; top: 205px; width: 124px; height: 123px; padding: 7px 13px; background: #4672b9; border: 2px solid #2f5288; color: #fff; line-height: 27px; }
                    .pointer { position: absolute; left: 672px; top: 383px; }
                    .scroll { width: 20px; padding: 0 3px 0 3px; display: flex; flex-direction: column; border-left: 1px solid #bbb; }
                    .scroll button { display: flex; align-items: center; justify-content: center; height: 13px; background: #fff; border: 1px solid #bbb; }
                    .track { flex: 1; background: #d9d9d9; padding: 42px 0 104px; display: flex; }
                    .thumb { flex: 1; background: #fff; border: 1px solid #bbb; }
                </style>
                <div class="view">
                    <table>
                        <colgroup><col style="width: 40px">${COLUMNS.map(c => `<col style="width: ${WIDTHS[c] || 45}px">`).join("")}<col></colgroup>
                        <thead><tr><th><svg width="22" height="20"><path d="M20 0v19H0z"/></svg></th>${COLUMNS.map(c => `<th scope="col"${c === "L" ? ' class="on"' : ""}>${c}</th>`).join("")}<th></th></tr></thead>
                        <tbody>${rows.join("")}</tbody>
                    </table>
                    <div class="shape">MUX<br>4X1</div>
                    <app-icon class="pointer" name="cross"></app-icon>
                </div>
                <div class="scroll">
                    <button aria-label="Subir"><app-icon name="arrowUp"></app-icon></button>
                    <div class="track"><div class="thumb"></div></div>
                    <button aria-label="Bajar"><app-icon name="arrowDown"></app-icon></button>
                </div>`;
            }
        }
        customElements.define("spread-sheet", SpreadSheet);

        class SheetTabs extends BaseElement {
            render() {
                return `<style>
                    :host { display: flex; flex: none; align-items: center; height: 26px; background: var(--grey); border-top: 1px solid #ababab; border-bottom: 1px solid #ccc; padding-right: 20px; }
                    button { display: flex; align-items: center; justify-content: center; }
                    .move { width: 27px; }
                    .nav { display: flex; padding-left: 14px; width: 94px; }
                    .tab { align-self: flex-start; width: 56px; height: 24px; margin-top: -1px; background: #fff; color: #1e7145; font-size: 12px; font-weight: 700; border: solid #ababab; border-width: 0 1px; border-bottom: 2px solid #1e7145; }
                    .add { width: 76px; color: #666; }
                    .space { flex: 1; }
                    .scroll { display: flex; flex: none; height: 15px; width: 478px; margin-left: 13px; background: #d9d9d9; }
                    .scroll button { width: 14px; background: #fff; border: 1px solid #bbb; }
                    .track { flex: 1; padding-right: 29px; display: flex; }
                    .thumb { flex: 1; background: #fff; border: 1px solid #bbb; }
                </style>
                <div class="nav">
                    <button class="move" aria-label="Anterior"><app-icon name="tabPrev"></app-icon></button>
                    <button class="move" aria-label="Siguiente"><app-icon name="tabNext"></app-icon></button>
                </div>
                <button class="tab">Hoja1</button>
                <button class="add" aria-label="Hoja nueva"><app-icon name="add"></app-icon></button>
                <span class="space"></span>
                <app-icon name="grip"></app-icon>
                <div class="scroll">
                    <button aria-label="Izquierda"><app-icon name="arrowLeft"></app-icon></button>
                    <div class="track"><div class="thumb"></div></div>
                    <button aria-label="Derecha"><app-icon name="arrowRight"></app-icon></button>
                </div>`;
            }
        }
        customElements.define("sheet-tabs", SheetTabs);

        class StatusBar extends BaseElement {
            render() {
                return `<style>
                    :host { display: flex; flex: none; align-items: center; height: 20px; padding: 0 7px; background: var(--ribbon); font-size: 10px; }
                    .text { width: 66px; }
                    .views { display: flex; margin-left: auto; height: 100%; }
                    button { display: flex; align-items: center; justify-content: center; }
                    .views button { width: 38px; }
                    .views button.on { background: #d2d2cf; }
                    .zoom { display: flex; align-items: center; margin: 0 11px 0 2px; }
                    input { appearance: none; width: 94px; height: 14px; margin: 0 5px; background: linear-gradient(#999, #999) 0 7px / 100% 1px no-repeat; }
                    input::-webkit-slider-thumb { appearance: none; width: 5px; height: 11px; background: #666; }
                </style>
                <span class="text">Listo</span>
                <button aria-label="Grabar macro"><app-icon name="record"></app-icon></button>
                <div class="views">
                    <button class="on" aria-label="Normal"><app-icon name="viewNormal"></app-icon></button>
                    <button aria-label="Diseño de página"><app-icon name="viewLayout"></app-icon></button>
                    <button aria-label="Salto de página"><app-icon name="viewBreak"></app-icon></button>
                </div>
                <div class="zoom">
                    <button aria-label="Alejar"><app-icon name="minus"></app-icon></button>
                    <input type="range" aria-label="Zoom" min="0" max="100" value="60">
                    <button aria-label="Acercar"><app-icon name="plus"></app-icon></button>
                </div>
                <span>160 %</span>`;
            }
        }
        customElements.define("status-bar", StatusBar);

        class TaskBar extends BaseElement {
            app(name) {
                const state = { firefox: "run", explorer: "run", spider: "run", filmora: "alert", excel: "now" }[name] || "";
                return `<button class="${state}" aria-label="${name}"><app-icon name="${name}"></app-icon></button>`;
            }
            render() {
                return `<style>
                    :host { display: flex; flex: none; height: 38px; background: linear-gradient(90deg, #233a40 0%, #22383f 65%, #1b2936 78%, #1c2440 100%); color: #fff; }
                    button { display: flex; align-items: center; justify-content: center; }
                    .start, .search, .shell, .apps { flex: none; }
                    .start { width: 45px; }
                    .search { display: flex; align-items: center; gap: 9px; width: 322px; padding-left: 12px; background: #f2f2f2; color: #333; font-size: 13px; }
                    .search input { flex: 1; min-width: 0; }
                    .search input::placeholder { color: #555; opacity: 1; }
                    .shell button { width: 45px; }
                    .shell, .apps { display: flex; }
                    .apps button { width: 36px; border-bottom: 3px solid transparent; border-top: 3px solid transparent; }
                    .apps .run { background: linear-gradient(#76b9ed, #76b9ed) center bottom / 27px 3px no-repeat border-box; }
                    .apps.more { display: grid; grid-template-columns: repeat(9, 1fr); width: 312px; }
                    .apps.more button { width: auto; }
                    .apps .alert { background: #a5602f; border-color: #a5602f; border-bottom-color: #f0801e; }
                    .apps .now { background: #4a5c66; border-color: #4a5c66; border-bottom-color: #76b9ed; }
                    .tray { display: flex; align-items: center; gap: 9px; margin-left: auto; padding-right: 21px; font-size: 10px; }
                    .temp { font-size: 13px; margin-right: 5px; }
                    .clock { text-align: center; padding: 0 10px 0 5px; }
                </style>
                <button class="start" aria-label="Inicio"><app-icon name="windows"></app-icon></button>
                <label class="search"><app-icon name="searchTask"></app-icon><input type="search" aria-label="Escribe aquí para buscar" placeholder="Escribe aquí para buscar"></label>
                <div class="shell">
                    <button aria-label="Cortana"><app-icon name="cortana"></app-icon></button>
                    <button aria-label="Vista de tareas"><app-icon name="taskView"></app-icon></button>
                </div>
                <div class="apps">${["firefox", "explorer", "edge", "studio", "cloudApp"].map(this.app).join("")}</div>
                <div class="apps more">${["arduino", "chips", "notes", "brain", "dbTools", "cube", "spider", "filmora", "excel"].map(this.app).join("")}</div>
                <div class="tray">
                    <app-icon name="weather"></app-icon><span class="temp">20°C</span>
                    <app-icon name="chevronUp"></app-icon>
                    <app-icon name="battery"></app-icon>
                    <app-icon name="volume"></app-icon>
                    <app-icon name="wifi"></app-icon>
                    <span>ESP</span>
                    <div class="clock">18:21<br>04/10/2021</div>
                    <app-icon name="notify"></app-icon>
                </div>`;
            }
        }
        customElements.define("task-bar", TaskBar);
    </script>
</body>
</html>
